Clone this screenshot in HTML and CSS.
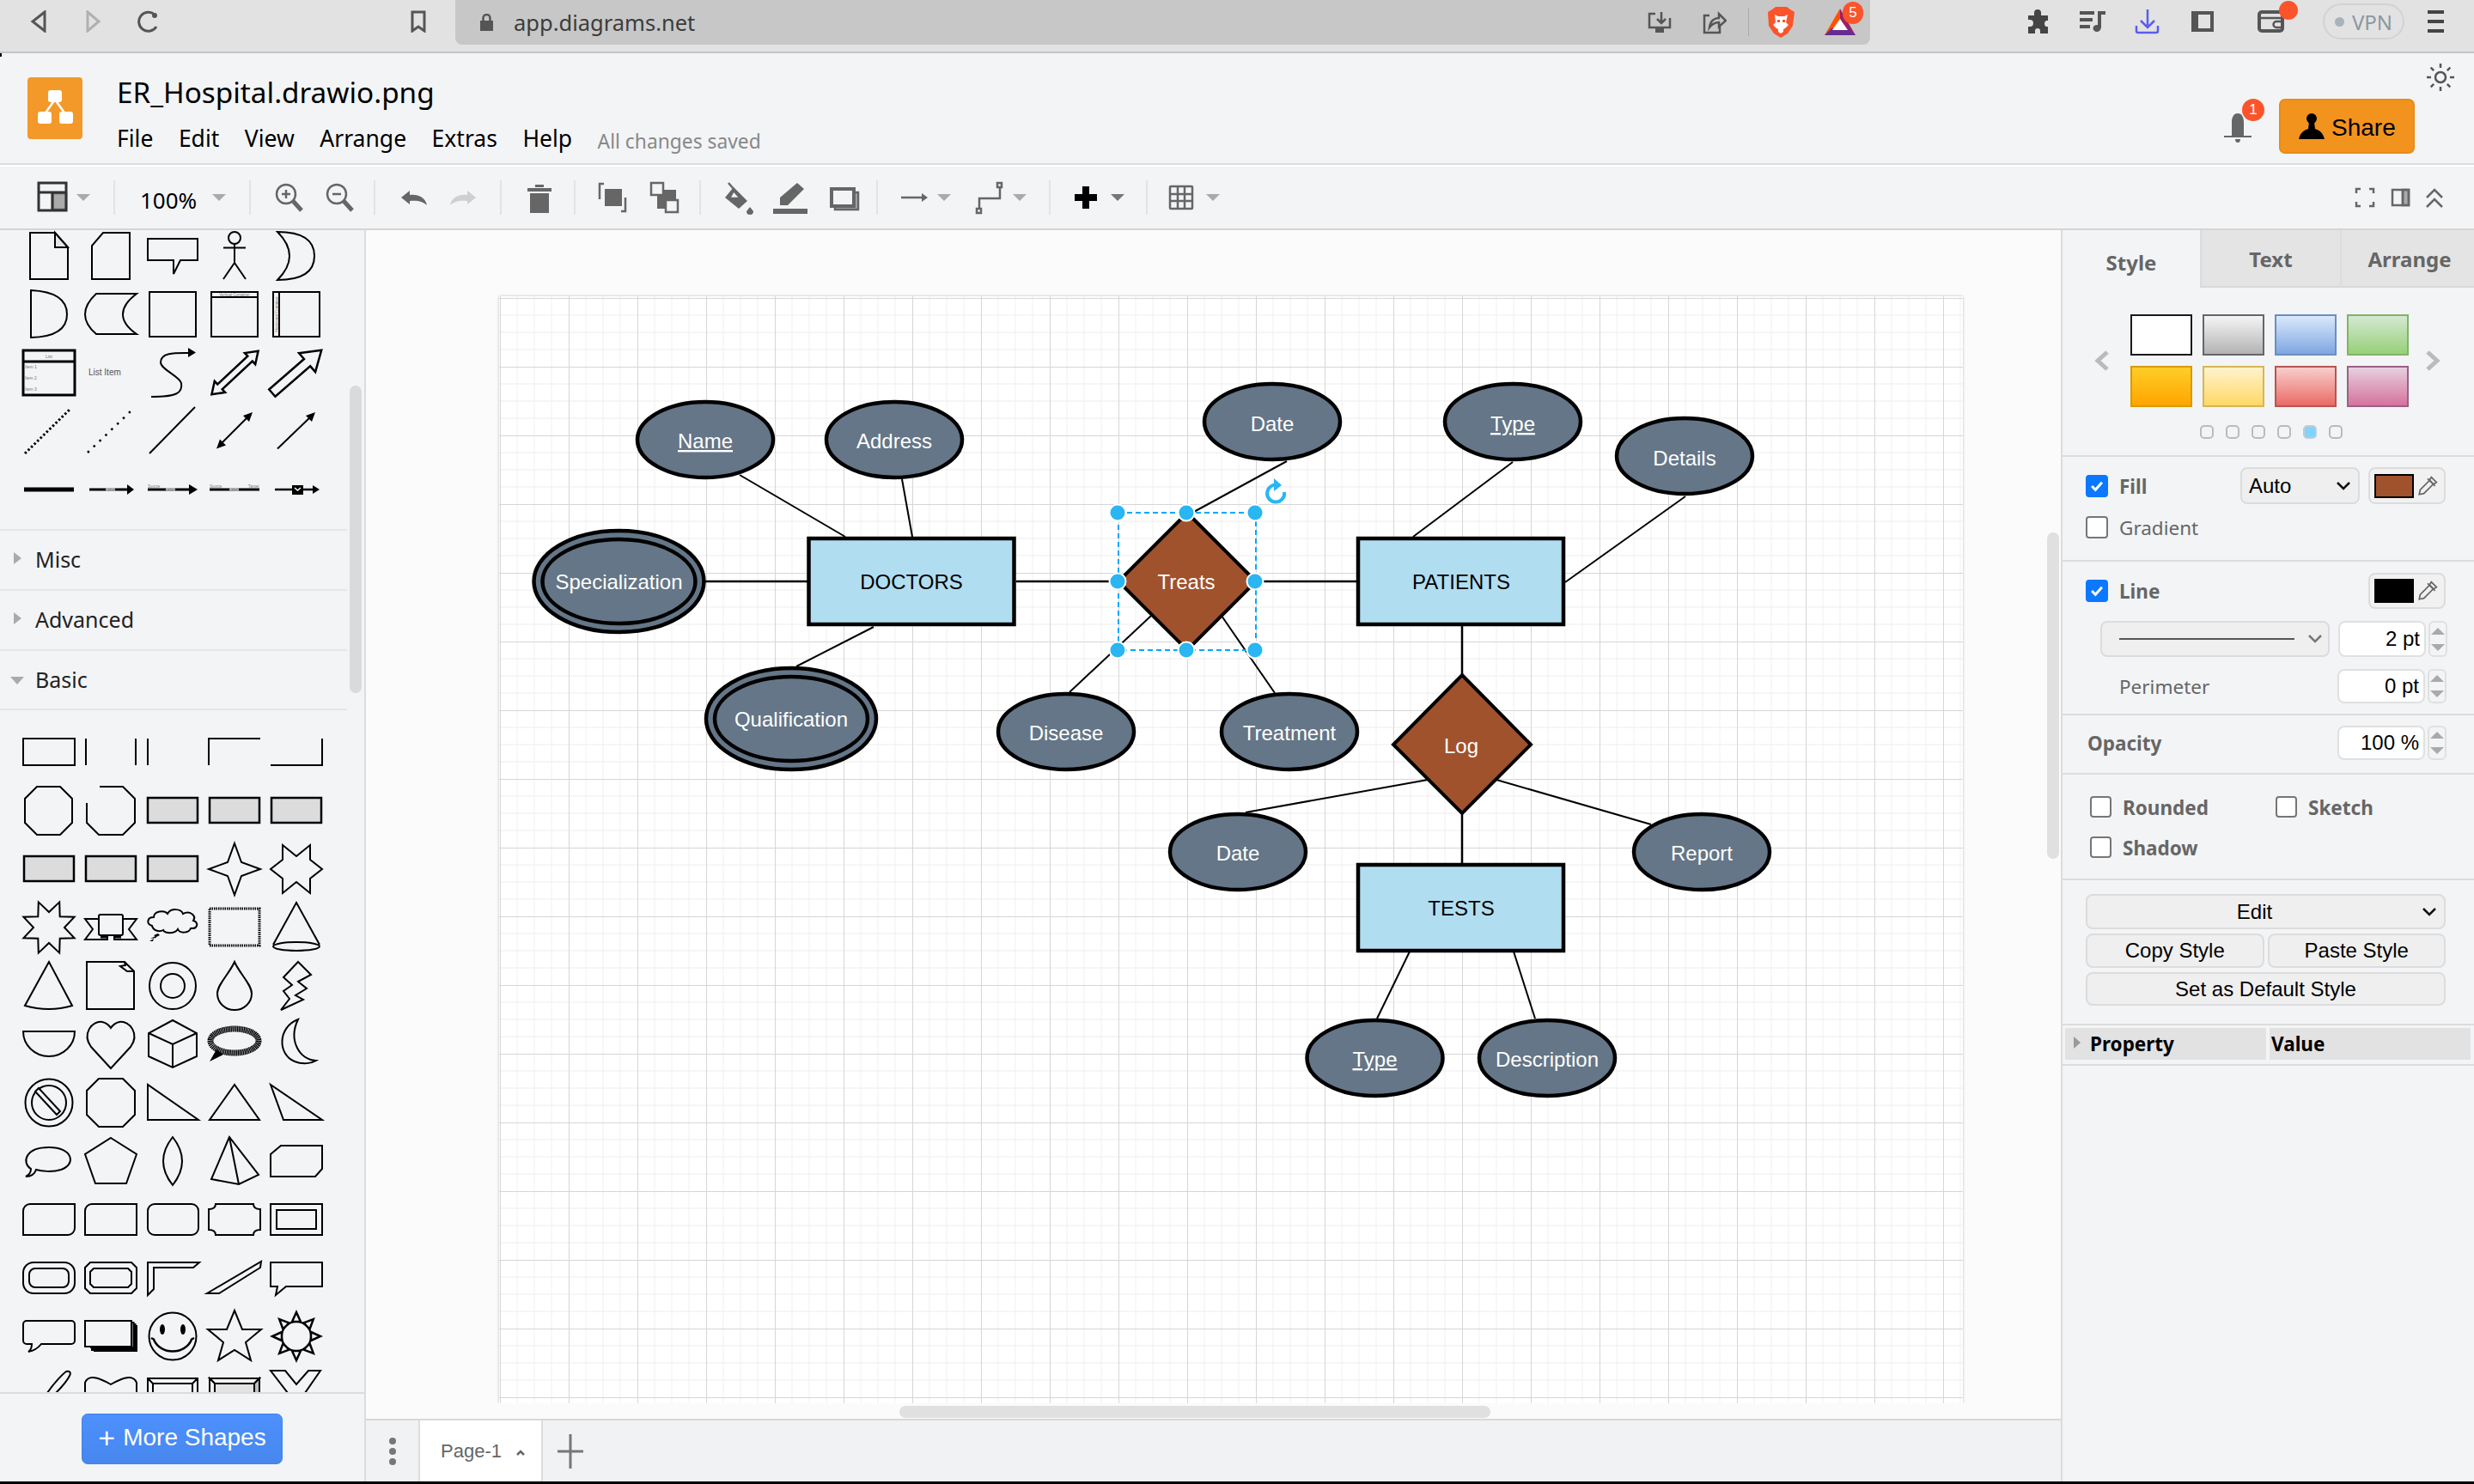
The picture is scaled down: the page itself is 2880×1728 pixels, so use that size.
FILE: index.html
```html
<!DOCTYPE html>
<html lang="en">
<head>
<meta charset="utf-8">
<title>ER_Hospital.drawio.png</title>
<link rel="stylesheet" href="styles.css">
</head>
<body>
<div class="app">

<div class="browser">
  <svg class="bi b-back" viewBox="0 0 20 26"><path d="M17 2 3 13l14 11z"/></svg>
  <svg class="bi b-forward" viewBox="0 0 18 26"><path d="M2 2 15 13 2 24z"/></svg>
  <svg class="bi b-reload" viewBox="0 0 26 26"><path d="M20 5A11 11 0 1 0 22 19"/><circle class="f" cx="20" cy="6" r="3"/></svg>
  <svg class="bi b-mark" viewBox="0 0 20 26"><path d="M3 2h14v22l-7-5-7 5z"/></svg>
  <div class="urlbar">
    <svg class="b-lock" viewBox="0 0 17 20"><path class="f" d="M1 8h15v12H1z"/><path class="lk" d="M4.5 9V5a4 4 0 0 1 8 0v4"/></svg>
    <span class="url">app.diagrams.net</span>
    <svg class="bi b-install" viewBox="0 0 28 26"><path d="M9 3H2v16h24V8"/><path d="M16 1v12M11 9l5 5 5-5"/><path class="f" d="M9 20h10v5H9z"/></svg>
    <svg class="bi b-share" viewBox="0 0 28 28"><path d="M8 6H2v20h18v-7"/><path d="M8 20c1-8 6-11 11-11V4l8 8-8 7v-5c-5 0-8 2-11 6z"/></svg>
    <span class="b-sep"></span>
    <svg class="b-brave" viewBox="0 0 31 36"><path fill="#fb542b" d="M5 3 9 0h13l4 3 5 3-2 16-6 9-8 5-8-5-6-9L0 6z"/><path fill="#fff" d="M8 9l4 2h7l4-2-2 9 3 3-4 4-2 1v3l-3 2-3-2v-3l-2-1-4-4 3-3z"/><path fill="#fb542b" d="M11 15h3v3h-3zM17 15h3v3h-3z"/></svg>
    <span class="bat">
      <svg class="b-bat" viewBox="0 0 36 32"><path fill="#ff5000" d="M18 0 0 31h8L18 12z"/><path fill="#9e1f63" d="M18 0l18 31h-8L18 12z"/><path fill="#662d91" d="M0 31l8-8h20l8 8z"/><path fill="#fff" d="M18 12l9 13H9z"/></svg>
      <span class="badge-5">5</span>
    </span>
  </div>
  <svg class="b-puzzle" viewBox="0 0 29 28"><path fill="#444" d="M10 4a4 4 0 0 1 8 0v3h8v6h-2a4 4 0 0 0 0 7h2v8h-9v-3a3 3 0 0 0-6 0v3H3v-8h2a4 4 0 0 0 0-8H3V7h7z"/></svg>
  <svg class="bi b-music" viewBox="0 0 32 26"><path d="M1 3h17M1 11h15M1 19h12M24 21V3h7"/><ellipse class="f" cx="21" cy="21" rx="4.5" ry="4"/></svg>
  <svg class="bi b-dl" viewBox="0 0 29 30"><path d="M15 1v21M7 14l8 8 8-8M2 20v6a2 2 0 0 0 2 2h21a2 2 0 0 0 2-2v-6"/></svg>
  <svg class="bi b-side" viewBox="0 0 26 24"><path class="thick" d="M2 2h22v20H2z"/><path class="f" d="M2 2h6v20H2z"/></svg>
  <span class="wallet">
    <svg class="bi b-wallet" viewBox="0 0 31 26"><path class="thick" d="M2 5a3 3 0 0 1 3-3h21a3 3 0 0 1 3 3v16a3 3 0 0 1-3 3H5a3 3 0 0 1-3-3z"/><path d="M2 9h27"/><path d="M29 13h-7a3 3 0 0 0 0 7h7"/></svg>
    <span class="wallet-dot"></span>
  </span>
  <span class="vpn"><i class="vpn-dot"></i>VPN</span>
  <span class="hamb"><i></i><i></i><i></i></span>
</div>

<header class="head">
  <svg class="logo" viewBox="0 0 64 72"><rect width="64" height="72" rx="4" fill="#f2992a"/><path d="M32 26 19 44M32 26 45 44" stroke="#fff" stroke-width="2.5"/><rect x="24" y="15" width="16" height="14" rx="3" fill="#fff"/><rect x="12" y="40" width="16" height="14" rx="3" fill="#fff"/><rect x="37" y="40" width="16" height="14" rx="3" fill="#fff"/></svg>
  <div class="titles">
    <div class="doc-title">ER_Hospital.drawio.png</div>
    <nav class="menu">
      <span>File</span><span>Edit</span><span>View</span><span>Arrange</span><span>Extras</span><span>Help</span>
      <em>All changes saved</em>
    </nav>
  </div>
  <div class="head-right">
    <svg class="gear" viewBox="0 0 34 34"><circle cx="17" cy="17" r="6"/><path d="M17 1v5M17 28v5M1 17h5M28 17h5M5.7 5.7l3.5 3.5M24.8 24.8l3.5 3.5M5.7 28.3l3.5-3.5M24.8 9.2l3.5-3.5"/></svg>
    <div class="actions">
      <span class="bell">
        <svg viewBox="0 0 32 34"><path fill="#666" d="M16 0c5 0 7 5 7 10v16h9v2H0v-2h9V10C9 5 11 0 16 0z"/><path fill="#666" d="M13 30h6a3 4 0 0 1-6 0z"/></svg>
        <span class="badge-1">1</span>
      </span>
      <button class="share">
        <svg viewBox="0 0 30 30"><circle cx="15" cy="6" r="6"/><path d="M12 10h6l1 8c5 2 9 4 11 12H0c2-8 6-10 11-12z"/></svg>
        <span>Share</span>
      </button>
    </div>
  </div>
</header>

<div class="toolbar">
  <svg class="ti t-layout" viewBox="0 0 40 40"><path fill="#aaa" d="M20 15h16v19H20z"/><path class="d" d="M4 3h32v32H4zM4 14h32M20 14v21"/></svg>
  <i class="caret c-first"></i>
  <span class="sep s-1"></span>
  <span class="zoomval">100%</span>
  <i class="caret c-zoom"></i>
  <span class="sep s-2"></span>
  <svg class="ti t-zi" viewBox="0 0 40 40"><circle cx="17" cy="16" r="11"/><path class="w" d="M25 24l10 11"/><path d="M12 16h10M17 11v10"/></svg>
  <svg class="ti t-zo" viewBox="0 0 40 40"><circle cx="17" cy="16" r="11"/><path class="w" d="M25 24l10 11"/><path d="M12 16h10"/></svg>
  <span class="sep s-3"></span>
  <svg class="ti t-undo" viewBox="0 0 40 40"><path class="solid" d="M6 20l10-8v5c10-1 18 3 20 12-5-5-12-6-20-5v4z"/></svg>
  <svg class="ti t-redo light" viewBox="0 0 40 40"><path class="solid" d="M34 20l-10-8v5C14 16 6 20 4 29c5-5 12-6 20-5v4z"/></svg>
  <span class="sep s-4"></span>
  <svg class="ti t-trash" viewBox="0 0 40 40"><path class="solid" d="M6 9h28v4H6zM15 5h10v3H15zM9 15h22v23H9z"/></svg>
  <span class="sep s-5"></span>
  <svg class="ti t-front" viewBox="0 0 40 40"><path class="solid" d="M11 10h20v20H11z"/><path d="M10 4H5v18M30 36h5V20"/></svg>
  <svg class="ti t-back" viewBox="0 0 40 40"><path class="solid" d="M12 11h22v22H12z"/><rect class="box" x="5" y="3" width="14" height="14"/><rect class="box" x="22" y="23" width="14" height="14"/></svg>
  <span class="sep s-6"></span>
  <svg class="ti t-fill" viewBox="0 0 40 40"><path class="solid" d="M14 8l16 16-10 9L4 20z"/><path class="solid" d="M33 31l4 5a4 4 0 0 1-8 0z"/><path class="wh" d="M14 12l8 9H9z"/><path d="M8 3l12 14"/></svg>
  <svg class="ti t-line" viewBox="0 0 40 40"><path class="solid" d="M28 3l8 7-19 19H8v-9zM0 33h40v6H0z"/></svg>
  <svg class="ti t-shadow" viewBox="0 0 40 40"><path fill="#aaa" d="M10 14h27v20H10z"/><path class="wh thick" d="M6 10h26v20H6z"/></svg>
  <span class="sep s-7"></span>
  <svg class="ti t-arrow" viewBox="0 0 40 40"><path d="M5 20h26"/><path class="solid" d="M29 15l7 5-7 5z"/></svg>
  <i class="caret c-arrow"></i>
  <svg class="ti t-way" viewBox="0 0 40 40"><path d="M8 33V21h24V8"/><rect class="box" x="29" y="3" width="5" height="5"/><rect class="box" x="5" y="33" width="5" height="5"/></svg>
  <i class="caret c-way"></i>
  <span class="sep s-8"></span>
  <svg class="ti t-plus" viewBox="0 0 40 40"><path class="plus" d="M20 7v26M7 20h26"/></svg>
  <i class="caret dark c-plus"></i>
  <span class="sep s-9"></span>
  <svg class="ti t-table" viewBox="0 0 40 40"><rect x="7" y="7" width="26" height="26" rx="1"/><path d="M16 7v26M24 7v26M7 16h26M7 24h26"/></svg>
  <i class="caret c-table"></i>
  <svg class="ti t-full" viewBox="0 0 40 40"><path d="M10 15v-5h5M25 10h5v5M30 25v5h-5M15 30h-5v-5"/></svg>
  <svg class="ti t-panel" viewBox="0 0 40 40"><path fill="#aaa" d="M23 11h7v18h-7z"/><path d="M11 11h19v18H11zM23 11v18"/></svg>
  <svg class="ti t-coll" viewBox="0 0 40 40"><path d="M11 20l9-9 9 9M11 31l9-9 9 9"/></svg>
</div>

<div class="main">
  <aside class="sidebar">
    <div class="palette-scroll">
      <div class="palette p-top">
        <svg class="sh" viewBox="0 0 72 68"><path d="M14 7h29l15 17v37H14z"/><path class="g1" d="M43 7v17h15z"/></svg>
        <svg class="sh" viewBox="0 0 72 68"><path d="M27 7h31v54H14V22z"/></svg>
        <svg class="sh" viewBox="0 0 72 68"><path d="M7 14h58v25H45l-8 16V39H7z"/></svg>
        <svg class="sh" viewBox="0 0 72 68"><circle cx="36" cy="13" r="7"/><path d="M23 24.500h26M36 20v22L23 61M36 42l13 19"/></svg>
        <svg class="sh" viewBox="0 0 72 68"><path d="M14 6q43 0 43 28T14 62q14-14 14-28T14 6z"/></svg>

        <svg class="sh" viewBox="0 0 72 68"><path d="M15 6q42 2 42 28T15 61z"/></svg>
        <svg class="sh" viewBox="0 0 72 68"><path d="M19 10h47Q50 22 50 34t16 23H19Q6 46 6 34t13-24z"/></svg>
        <svg class="sh" viewBox="0 0 72 68"><path d="M9 8h54v52H9z"/></svg>
        <svg class="sh" viewBox="0 0 72 68"><path d="M9 8h54v52H9zM9 14h54"/><text class="tiny" x="36" y="12.500" text-anchor="middle">Vertical Container</text></svg>
        <svg class="sh" viewBox="0 0 72 68"><path d="M9 8h54v52H9zM16 8v52"/><text class="tiny" transform="rotate(-90 13.500 34)" x="13.500" y="35.500" text-anchor="middle">Horizontal Container</text></svg>

        <svg class="sh" viewBox="0 0 72 68"><path class="t3" d="M6 8h60v52H6zM6 21h60"/><text class="tiny5" x="36" y="17" text-anchor="middle">List</text><text class="tiny5" x="8" y="29">Item 1</text><text class="tiny5" x="8" y="42">Item 2</text><text class="tiny5" x="8" y="55">Item 3</text></svg>
        <svg class="sh" viewBox="0 0 72 68"><text class="listitem" x="10" y="37">List Item</text></svg>
        <svg class="sh" viewBox="0 0 72 68"><path d="M11 62c29 0 37-4 35-16-2-8-24-16-24-24 0-12 18-11 33-11"/><path class="k" d="M54 5l9 5.500-9 5.500z"/></svg>
        <svg class="sh" viewBox="0 0 72 68"><path class="t25" transform="translate(36.500 34) rotate(-43)" d="M-37 0l13-9v5h48v-5l13 9-13 9v-5h-48v5z"/></svg>
        <svg class="sh" viewBox="0 0 72 68"><path class="t25" transform="translate(35 34) rotate(-41)" d="M-36-5.500h54v-9L40 0 18 14.500V5.500h-54z"/></svg>

        <svg class="sh" viewBox="0 0 72 68"><path class="dot1" d="M8 60 61 8"/></svg>
        <svg class="sh" viewBox="0 0 72 68"><path class="dot2" d="M9 59l50-48"/></svg>
        <svg class="sh" viewBox="0 0 72 68"><path d="M9 60 62 6"/></svg>
        <svg class="sh" viewBox="0 0 72 68"><path d="M19 50l34-34"/><path class="k" d="M15 54.500l4-11 7 7zM57 12l-4 11-7-7z"/></svg>
        <svg class="sh" viewBox="0 0 72 68"><path d="M14 54.500 54 16"/><path class="k" d="M58 12l-4 11-7-7z"/></svg>

        <svg class="sh" viewBox="0 0 72 68"><path class="t5" d="M7 34h58"/></svg>
        <svg class="sh" viewBox="0 0 72 68"><path class="t3" d="M11 34h46"/><path class="k" d="M55 28l8 6-8 6z"/><rect class="mask" x="30" y="32" width="11" height="4"/><text class="tiny" x="35.500" y="35.500" text-anchor="middle">Label</text></svg>
        <svg class="sh" viewBox="0 0 72 68"><path class="t3" d="M7 34h50"/><path class="k" d="M55 28l10 6-10 6z"/><rect class="mask" x="28" y="32" width="11" height="4"/><text class="tiny" x="33" y="35.500" text-anchor="middle">Label</text><text class="tiny" x="7" y="32">Source</text></svg>
        <svg class="sh" viewBox="0 0 72 68"><path class="t3" d="M7 34h58"/><rect class="mask" x="30" y="32" width="11" height="4"/><text class="tiny" x="35" y="35.500" text-anchor="middle">Label</text><text class="tiny" x="7" y="32">Source</text><text class="tiny" x="52" y="32">Target</text></svg>
        <svg class="sh" viewBox="0 0 72 68"><path class="t25" d="M11 34h46"/><path class="k" d="M55 29l8 5-8 5z"/><path class="k" d="M31 29h13v11H31z"/><path class="wline" d="M34 32l3.500 3 3.500-3"/></svg>
      </div>

      <div class="section">Misc</div>
      <div class="section">Advanced</div>
      <div class="section open">Basic</div>

      <div class="palette p-basic">
        <svg class="sh" viewBox="0 0 72 68"><path d="M6 18h60v31H6z"/></svg>
        <svg class="sh" viewBox="0 0 72 68"><path d="M7 18v31M65 18v31"/></svg>
        <svg class="sh" viewBox="0 0 72 68"><path d="M7 18v31"/></svg>
        <svg class="sh" viewBox="0 0 72 68"><path d="M6 49V18h60"/></svg>
        <svg class="sh" viewBox="0 0 72 68"><path d="M6 49h60V18"/></svg>

        <svg class="sh" viewBox="0 0 72 68"><path d="M22 6h27l14 14v28L49 62H22L8 48V20z"/></svg>
        <svg class="sh" viewBox="0 0 72 68"><path d="M23 6h27l14 14v28L50 62H22L8 48V25"/></svg>
        <svg class="sh" viewBox="0 0 72 68"><path class="gr" d="M7 19h58v29H7z"/></svg>
        <svg class="sh" viewBox="0 0 72 68"><path class="gr" d="M7 19h58v29H7z"/></svg>
        <svg class="sh" viewBox="0 0 72 68"><path class="gr" d="M7 19h58v29H7z"/></svg>

        <svg class="sh" viewBox="0 0 72 68"><path class="gr" d="M7 19h58v29H7z"/></svg>
        <svg class="sh" viewBox="0 0 72 68"><path class="gr" d="M7 19h58v29H7z"/></svg>
        <svg class="sh" viewBox="0 0 72 68"><path class="gr" d="M7 19h58v29H7z"/></svg>
        <svg class="sh" viewBox="0 0 72 68"><path d="M36 4l8 22 22 8-22 8-8 22-8-22-22-8 22-8z"/></svg>
        <svg class="sh" viewBox="0 0 72 68"><path d="M20 6l16 13L52 6v17l14 11-14 11v17L36 49 20 62V45L6 34l14-11z"/></svg>

        <svg class="sh" viewBox="0 0 72 68"><path d="M23.800 4.400 36 16l12.200-11.600 .5 16.900 16.900.5L54 34l11.600 12.200-16.900.5-.5 16.900L36 52 23.800 63.600l-.5-16.900-16.900-.5L18 34 6.400 21.800l16.900-.5z"/></svg>
        <svg class="sh" viewBox="0 0 72 68"><path d="M22 24H6l9 12-9 12h26v-5M50 24h16l-9 12 9 12H40v-5M32 43v5M40 43v5"/><rect x="22" y="19" width="28" height="24" rx="2"/><path class="t3" d="M24 45h8M40 45h8"/></svg>
        <svg class="sh" viewBox="0 0 72 68"><path d="M12 32C5 30 6 22 14 22c0-7 12-9 16-4 4-7 16-6 18 0 8-4 16 2 12 8 7 2 5 10-3 9-2 6-13 6-15 1-4 6-15 5-17 1-5 3-12 0-13-5z"/><path class="k" d="M9 50l5-3-1 3zM10 47l6-3 1 2zM14 43l5-2 2 2-4 2z"/></svg>
        <svg class="sh" viewBox="0 0 72 68"><path class="wavy" d="M7 12h58v43H7z"/></svg>
        <svg class="sh" viewBox="0 0 72 68"><path d="M9 54 36 5l27 49"/><ellipse cx="36" cy="56" rx="27" ry="5"/></svg>

        <svg class="sh" viewBox="0 0 72 68"><path d="M36 6 8 57q28 8 55 0z"/></svg>
        <svg class="sh" viewBox="0 0 72 68"><path d="M8 6h44l11 11v44H8z"/><path d="M52 6l1 4-6 1 8 6h8"/></svg>
        <svg class="sh" viewBox="0 0 72 68"><circle cx="36" cy="34" r="27"/><circle cx="36" cy="34" r="14"/></svg>
        <svg class="sh" viewBox="0 0 72 68"><path d="M36 6c-6 14-20 26-20 37a20 19 0 0 0 40 0c0-11-14-23-20-37z"/></svg>
        <svg class="sh" viewBox="0 0 72 68"><path d="M38 6l15 15-15 8 10 8-13 8 9 5-26 12 10-13-7-9 10-7-10-9z"/></svg>

        <svg class="sh" viewBox="0 0 72 68"><path d="M6 19h60a30 29 0 0 1-60 0z"/></svg>
        <svg class="sh" viewBox="0 0 72 68"><path d="M36 62 13 37C2 22 14 6 26 8c5 1 8 4 10 7 2-3 5-6 10-7 12-2 24 14 13 29z"/></svg>
        <svg class="sh" viewBox="0 0 72 68"><path d="M36 6l28 15v27L36 61 8 48V21zM8 21l28 13 28-13M36 34v27"/></svg>
        <svg class="sh" viewBox="0 0 72 68"><path class="k" d="M15 40 7 54l16-8z"/><ellipse class="spiky" cx="36" cy="30" rx="28" ry="14"/><ellipse class="wh2" cx="36" cy="30" rx="23" ry="10"/></svg>
        <svg class="sh" viewBox="0 0 72 68"><path d="M38 5C14 14 14 46 34 54c10 4 20 2 25-1C40 52 26 30 38 5z"/></svg>

        <svg class="sh" viewBox="0 0 72 68"><circle cx="36" cy="34" r="27.500"/><circle cx="36" cy="34" r="20"/><path class="wfill" d="M24 17 49 44 45 48 20 21z"/></svg>
        <svg class="sh" viewBox="0 0 72 68"><path d="M22 6h28l14 14v28L50 62H22L8 48V20z"/></svg>
        <svg class="sh" viewBox="0 0 72 68"><path d="M7 13v41h59z"/></svg>
        <svg class="sh" viewBox="0 0 72 68"><path d="M36 13 7 54h58z"/></svg>
        <svg class="sh" viewBox="0 0 72 68"><path d="M6 13l15 41h45z"/></svg>

        <svg class="sh" viewBox="0 0 72 68"><path d="M15 43C4 36 8 18 36 18c28 0 32 20 14 26-10 3-22 2-29 0-2 6-6 8-12 8 4-2 6-5 6-9z"/></svg>
        <svg class="sh" viewBox="0 0 72 68"><path d="M36 7l30 19-12 34H18L6 26z"/></svg>
        <svg class="sh" viewBox="0 0 72 68"><path d="M36 6q22 28 0 56-22-28 0-56z"/></svg>
        <svg class="sh" viewBox="0 0 72 68"><path d="M30 6 9 55l32 6 23-11zM30 6l11 55"/></svg>
        <svg class="sh" viewBox="0 0 72 68"><path d="M18 16h48v27l-8 9H6V26z"/></svg>

        <svg class="sh" viewBox="0 0 72 68"><path d="M14 16h52v28a8 8 0 0 1-8 8H6V24a8 8 0 0 1 8-8z"/></svg>
        <svg class="sh" viewBox="0 0 72 68"><path d="M14 16h52v36H6V24a8 8 0 0 1 8-8z"/></svg>
        <svg class="sh" viewBox="0 0 72 68"><rect x="7" y="16" width="59" height="36" rx="8"/></svg>
        <svg class="sh" viewBox="0 0 72 68"><path d="M14 16h44q0 6 8 6v24q-8 0-8 6H14q0-6-8-6V22q8 0 8-6z"/></svg>
        <svg class="sh" viewBox="0 0 72 68"><path d="M6 16h60v36H6zM13 23h46v22H13z"/></svg>

        <svg class="sh" viewBox="0 0 72 68"><rect x="6" y="16" width="60" height="36" rx="12"/><rect x="13" y="23" width="46" height="22" rx="7"/></svg>
        <svg class="sh" viewBox="0 0 72 68"><path d="M12 16h48l6 6v24l-6 6H12l-6-6V22zM16 23h40l4 4v14l-4 4H16l-4-4V27z"/></svg>
        <svg class="sh" viewBox="0 0 72 68"><path d="M7 16h60l-7 6H14v25l-7 7z"/></svg>
        <svg class="sh" viewBox="0 0 72 68"><path d="M4 52 67 15l-1 7-48 30z"/></svg>
        <svg class="sh" viewBox="0 0 72 68"><path d="M6 16h60v28H24l-12 10 2-10H6z"/></svg>

        <svg class="sh" viewBox="0 0 72 68"><path d="M10 16h52a4 4 0 0 1 4 4v19a4 4 0 0 1-4 4H27c-4 5-9 8-15 9 3-2 4-5 4-9h-6a4 4 0 0 1-4-4V20a4 4 0 0 1 4-4z"/></svg>
        <svg class="sh" viewBox="0 0 72 68"><path d="M60 18h2.500v29H12M62.500 20h2v29H14M64.500 22H66v29H16" /><path class="k" d="M13 46h50v5H13z"/><path class="wh3" d="M6 16h54v30H6z"/></svg>
        <svg class="sh" viewBox="0 0 72 68"><circle cx="36" cy="34" r="27.500"/><ellipse class="k" cx="24" cy="26" rx="3" ry="6"/><ellipse class="k" cx="48" cy="26" rx="3" ry="6"/><path class="t25" d="M14 38c8 18 36 18 44 0M11 36l4 2M61 36l-4 2"/></svg>
        <svg class="sh" viewBox="0 0 72 68"><path d="M36 4l9 22h22L49 41l6 21-19-12-19 12 6-21L5 26h22z"/></svg>
        <svg class="sh" viewBox="0 0 72 68"><circle cx="36" cy="34" r="17"/><g><path id="ray" class="kr" d="M31 17l5-11 5 11z"/><use href="#ray" transform="rotate(45 36 34)"/><use href="#ray" transform="rotate(90 36 34)"/><use href="#ray" transform="rotate(135 36 34)"/><use href="#ray" transform="rotate(180 36 34)"/><use href="#ray" transform="rotate(225 36 34)"/><use href="#ray" transform="rotate(270 36 34)"/><use href="#ray" transform="rotate(315 36 34)"/></g></svg>

        <svg class="sh" viewBox="0 0 72 68"><path d="M34 32c8-12 18-22 22-25 4-1 6 1 4 5-4 8-10 14-16 20"/></svg>
        <svg class="sh" viewBox="0 0 72 68"><path d="M6 34V20c4-10 16-6 30 2 14-8 26-12 30-2v14"/></svg>
        <svg class="sh" viewBox="0 0 72 68"><path d="M7 15h58v30H7zM13 21h46v20H13zM7 15l6 6M65 15l-6 6"/></svg>
        <svg class="sh bev" viewBox="0 0 72 68"><path fill="#f2f1f0" d="M7 15h58l-6 6H13z"/><path fill="#f2f1f0" d="M7 15l6 6v20H7z"/><path fill="#e3e3e3" d="M13 21h46v20H13z"/><path fill="#c0c0c0" d="M65 15v26h-6V21z"/></svg>
        <svg class="sh" viewBox="0 0 72 68"><path d="M6 6h17l13 16L50 6h14L46 32H26z"/></svg>
      </div>
    </div>
    <div class="more-wrap"><button class="more"><b>+</b> <span>More Shapes</span></button></div>
    <span class="side-thumb"></span>
  </aside>

  <div class="center">
    <div class="canvas">
      <div class="page">
        <svg class="diagram" viewBox="581 345 1704 1289">
          <defs>
            <pattern id="grid" patternUnits="userSpaceOnUse" x="582" y="347" width="80" height="80">
              <path class="gmin-h" d="M0 20h80M0 40h80M0 60h80"/>
              <path class="gmin-v" d="M20 0v80M40 0v80M60 0v80"/>
              <path class="gmaj-h" d="M0 .5h80"/>
              <path class="gmaj-v" d="M.5 0v80"/>
            </pattern>
          </defs>
          <rect x="581" y="345" width="1704" height="1289" fill="url(#grid)"/>

          <g class="links">
            <path d="M861 553 984 625"/>
            <path d="M1050 558 1062 625"/>
            <path class="thick2" d="M821 677H940"/>
            <path d="M1017 730 927 776"/>
            <path class="thick2" d="M1183 677H1302M1462 677H1580"/>
            <path d="M1498 537 1388 597"/>
            <path d="M1245 806 1340 717"/>
            <path d="M1484 807 1422 717"/>
            <path d="M1761 538 1645 625"/>
            <path d="M1962 578 1822 678"/>
            <path class="thick2" d="M1702 729V786M1702 947V1005"/>
            <path d="M1662 908 1450 946"/>
            <path d="M1742 908 1922 960"/>
            <path d="M1641 1108 1603 1186"/>
            <path d="M1762 1108 1787 1186"/>
          </g>

          <g class="attr">
            <ellipse cx="821" cy="512" rx="79" ry="44"/>
            <ellipse cx="1041" cy="512" rx="79" ry="44"/>
            <ellipse cx="720.500" cy="677" rx="99" ry="59"/>
            <ellipse class="in" cx="720.500" cy="677" rx="89" ry="49"/>
            <ellipse cx="921" cy="837" rx="99" ry="59"/>
            <ellipse class="in" cx="921" cy="837" rx="89" ry="49"/>
            <ellipse cx="1481" cy="491" rx="79" ry="44"/>
            <ellipse cx="1761" cy="491" rx="79" ry="44"/>
            <ellipse cx="1961" cy="531" rx="79" ry="44"/>
            <ellipse cx="1241" cy="852" rx="79" ry="44"/>
            <ellipse cx="1501" cy="852" rx="79" ry="44"/>
            <ellipse cx="1441" cy="992" rx="79" ry="44"/>
            <ellipse cx="1981" cy="992" rx="79" ry="44"/>
            <ellipse cx="1600.500" cy="1232" rx="79" ry="44"/>
            <ellipse cx="1801" cy="1232" rx="79" ry="44"/>
          </g>

          <g class="ent">
            <rect x="941.500" y="627" width="239" height="100"/>
            <rect x="1581" y="627" width="239" height="100"/>
            <rect x="1581" y="1007" width="239" height="100"/>
          </g>
          <g class="rel">
            <path d="M1382 597 1462 677 1382 757 1302 677z"/>
            <path d="M1702 786 1782 867 1702 947 1622 867z"/>
          </g>

          <g class="lbl w">
            <text x="821" y="522" class="u">Name</text>
            <text x="1041" y="522">Address</text>
            <text x="720.500" y="686">Specialization</text>
            <text x="921" y="846">Qualification</text>
            <text x="1481" y="502">Date</text>
            <text x="1761" y="502" class="u">Type</text>
            <text x="1961" y="542">Details</text>
            <text x="1241" y="862">Disease</text>
            <text x="1501" y="862">Treatment</text>
            <text x="1441" y="1002">Date</text>
            <text x="1981" y="1002">Report</text>
            <text x="1600.500" y="1242" class="u">Type</text>
            <text x="1801" y="1242">Description</text>
            <text x="1381" y="686">Treats</text>
            <text x="1701" y="877">Log</text>
          </g>
          <g class="lbl">
            <text x="1061" y="686">DOCTORS</text>
            <text x="1701" y="686">PATIENTS</text>
            <text x="1701" y="1066">TESTS</text>
          </g>

          <rect class="sel" x="1302" y="597" width="160" height="160"/>
          <g class="handles">
            <circle cx="1301" cy="597" r="9.500"/><circle cx="1381" cy="597" r="9.500"/><circle cx="1461" cy="597" r="9.500"/>
            <circle cx="1301" cy="677" r="9.500"/><circle cx="1461" cy="677" r="9.500"/>
            <circle cx="1301" cy="757" r="9.500"/><circle cx="1381" cy="757" r="9.500"/><circle cx="1461" cy="757" r="9.500"/>
          </g>
          <g class="rotate">
            <path d="M1488 565a10 10 0 1 0 7 8" />
            <path class="rh" d="M1483 557l9 8-9 7z"/>
          </g>
        </svg>
      </div>
      <span class="h-thumb"></span>
      <span class="v-thumb"></span>
    </div>
    <div class="tabs">
      <span class="dots"><i></i><i></i><i></i></span>
      <div class="page-tab">Page-1 <svg viewBox="0 0 12 10"><path d="M2 7l4-4 4 4"/></svg></div>
      <svg class="add" viewBox="0 0 30 40"><path d="M15 0v40M0 20h30"/></svg>
    </div>
  </div>

  <aside class="panel">
    <div class="ptabs">
      <div class="ptab active">Style</div>
      <div class="ptab mid">Text</div>
      <div class="ptab last">Arrange</div>
    </div>
    <div class="sec styles">
      <div class="style-row">
        <svg class="chev" viewBox="0 0 18 26"><path d="M15 3 4 13l11 10"/></svg>
        <div class="swatches">
          <span class="sw s0"></span><span class="sw s1"></span><span class="sw s2"></span><span class="sw s3"></span>
          <span class="sw s4"></span><span class="sw s5"></span><span class="sw s6"></span><span class="sw s7"></span>
        </div>
        <svg class="chev" viewBox="0 0 18 26"><path d="M3 3l11 10L3 23"/></svg>
      </div>
      <div class="pager"><i></i><i></i><i></i><i></i><i class="on"></i><i></i></div>
    </div>

    <div class="sec fillsec">
      <div class="row">
        <span class="cb on"><svg viewBox="0 0 26 26"><path d="M6 13l5 5 9-10"/></svg></span>
        <span class="lab b">Fill</span>
        <span class="sel-box auto">Auto<svg class="chv" viewBox="0 0 18 12"><path d="M2 2l7 7 7-7"/></svg></span>
        <span class="colorbtn"><i class="cswatch brown"></i><svg class="pip" viewBox="0 0 24 24"><path d="M3 21l1-5L14 6l4 4L8 20zM12 4l8 8M16 2.500l5.500 5.500-3 2-4.500-4.500z"/></svg></span>
      </div>
      <div class="row r2">
        <span class="cb"></span>
        <span class="lab">Gradient</span>
      </div>
    </div>

    <div class="sec linesec">
      <div class="row r42">
        <span class="cb on"><svg viewBox="0 0 26 26"><path d="M6 13l5 5 9-10"/></svg></span>
        <span class="lab b">Line</span>
        <span class="colorbtn push"><i class="cswatch black"></i><svg class="pip" viewBox="0 0 24 24"><path d="M3 21l1-5L14 6l4 4L8 20zM12 4l8 8M16 2.500l5.500 5.500-3 2-4.500-4.500z"/></svg></span>
      </div>
      <div class="row r42 mt14">
        <span class="sel-box linesel"><i class="ln"></i><svg class="chv gr" viewBox="0 0 18 12"><path d="M2 2l7 7 7-7"/></svg></span>
        <span class="num h42">2 pt</span>
        <span class="spin h42"><i class="up"></i><i class="dn"></i></span>
      </div>
      <div class="row r40 mt14">
        <span class="lab perim">Perimeter</span>
        <span class="num push">0 pt</span>
        <span class="spin"><i class="up"></i><i class="dn"></i></span>
      </div>
    </div>

    <div class="sec opsec">
      <div class="row r40">
        <span class="lab b opl">Opacity</span>
        <span class="num push">100 %</span>
        <span class="spin"><i class="up"></i><i class="dn"></i></span>
      </div>
    </div>

    <div class="sec chks">
      <div class="chk-row">
        <span class="chk c-a"><span class="cb"></span><span class="lab b">Rounded</span></span>
        <span class="chk"><span class="cb"></span><span class="lab b">Sketch</span></span>
      </div>
      <div class="chk-row second">
        <span class="chk c-a"><span class="cb"></span><span class="lab b">Shadow</span></span>
      </div>
    </div>

    <div class="sec btns">
      <div class="btn edit">Edit<svg class="chv" viewBox="0 0 18 12"><path d="M2 2l7 7 7-7"/></svg></div>
      <div class="btn-row"><div class="btn">Copy Style</div><div class="btn">Paste Style</div></div>
      <div class="btn dflt">Set as Default Style</div>
    </div>

    <div class="sec tbl">
      <div class="th th1"><i class="tri"></i>Property</div>
      <div class="th">Value</div>
    </div>
  </aside>
</div>
</div>
</body>
</html>
```

FILE: styles.css
```css
* { box-sizing: border-box; }
html, body { margin: 0; padding: 0; height: 100%; }
body { font-family: "Noto Sans", "Liberation Sans", sans-serif; overflow: hidden; background: #f3f4f6; color: #000; }
.app { width: 2880px; height: 1728px; display: flex; flex-direction: column; border-bottom: 3px solid #000; }
i { font-style: normal; display: block; }

/* browser chrome */
.browser { height: 62px; flex: none; display: flex; align-items: center; padding-bottom: 10px; background: #e2e2e2; border-bottom: 2px solid #c4c4c4; }
.browser > * { flex: none; }
.bi { fill: none; stroke: #555; stroke-width: 2.5; }
.bi .f, .b-lock .f { fill: #555; stroke: none; }
.bi .thick { stroke-width: 4; }
.b-back { width: 20px; height: 26px; margin-left: 35px; stroke-width: 3; }
.b-forward { width: 18px; height: 26px; margin-left: 45px; stroke: #b0b0b0; stroke-width: 3; }
.b-reload { width: 26px; height: 26px; margin-left: 42px; stroke-width: 3; }
.b-mark { width: 20px; height: 26px; margin-left: 291px; stroke-width: 3; }
.urlbar { width: 1647px; height: 52px; margin-left: 33px; align-self: flex-start; background: #c7c7c7; border-radius: 0 0 8px 8px; display: flex; align-items: center; }
.b-lock { width: 17px; height: 20px; margin-left: 28px; }
.lk { fill: none; stroke: #555; stroke-width: 2.5; }
.url { margin-left: 23px; font-size: 25.500px; color: #3c3c3c; font-family: "Noto Sans", sans-serif; }
.b-install { width: 28px; height: 26px; margin-left: auto; }
.b-share { width: 28px; height: 28px; margin-left: 36px; }
.b-sep { width: 1px; height: 32px; margin-left: 25px; background: #aaa; }
.b-brave { width: 31px; height: 36px; margin-left: 22px; }
.bat { position: relative; width: 36px; height: 32px; margin-left: 35px; margin-right: 17px; }
.b-bat { width: 36px; height: 32px; display: block; }
.badge-5 { position: absolute; left: 21px; top: -8px; width: 24px; height: 26px; border-radius: 12px; background: #fb542b; color: #fff; font: 17px/26px "Liberation Sans", sans-serif; text-align: center; }
.b-puzzle { width: 29px; height: 28px; margin-left: 181px; }
.b-music { width: 32px; height: 26px; margin-left: 33px; stroke-width: 4; }
.b-dl { width: 29px; height: 30px; margin-left: 33px; stroke: #5c5cf0; }
.b-side { width: 26px; height: 24px; margin-left: 37px; }
.wallet { position: relative; width: 31px; height: 26px; margin-left: 51px; }
.b-wallet { width: 31px; height: 26px; display: block; }
.wallet-dot { position: absolute; left: 25px; top: -11px; width: 22px; height: 22px; border-radius: 50%; background: #fb542b; }
.vpn { width: 95px; height: 42px; margin-left: 45px; border: 2px solid #cfd3d6; border-radius: 21px; display: flex; align-items: center; justify-content: center; gap: 9px; color: #8a98a3; font: 24px "Noto Sans", sans-serif; }
.vpn-dot { width: 11px; height: 11px; border-radius: 50%; background: #a8b2ba; }
.hamb { margin-left: 27px; width: 19px; height: 26px; display: flex; flex-direction: column; justify-content: space-between; }
.hamb i { height: 4px; background: #444; }

/* app header */
.head { position: relative; height: 130px; flex: none; display: flex; background: #f3f4f6; border-bottom: 2px solid #dcdcdc; }
.head::before { content: ""; position: absolute; left: 0; top: 0; width: 2px; height: 4px; background: #000; }
.logo { width: 64px; height: 72px; margin: 28px 0 0 32px; flex: none; }
.titles { margin-left: 40px; padding-top: 22px; }
.doc-title { font-size: 33.300px; line-height: 46px; color: #000; }
.menu { display: flex; align-items: baseline; margin-top: 14px; font-size: 26.500px; line-height: 34px; }
.menu span { margin-right: 29.500px; }
.menu em { font-style: normal; font-size: 22.800px; color: #888; margin-left: 0; position: relative; top: 2px; }
.head-right { margin-left: auto; display: flex; flex-direction: column; align-items: flex-end; padding: 11px 22px 0 0; }
.gear { width: 34px; height: 34px; fill: none; stroke: #555; stroke-width: 2.5; }
.actions { display: flex; align-items: flex-start; margin: 8px 47px 0 0; }
.bell { position: relative; width: 32px; height: 34px; margin-top: 17px; margin-right: 32px; }
.bell svg { width: 32px; height: 34px; display: block; }
.badge-1 { position: absolute; left: 21px; top: -17px; width: 26px; height: 26px; border-radius: 50%; background: #fb542b; color: #fff; font: 17px/26px "Liberation Sans", sans-serif; text-align: center; }
.share { width: 158px; height: 64px; display: flex; align-items: center; padding: 0 0 0 21px; gap: 8px; background: #f2931e; border: 2px solid #e98c15; border-radius: 7px; font: 28px "Liberation Sans", sans-serif; color: #000; }
.share svg { width: 30px; height: 30px; }
.share span { position: relative; top: 2px; }

/* toolbar */
.toolbar { height: 76px; flex: none; display: flex; align-items: center; background: #f3f4f6; border-top: 2px solid #fff; border-bottom: 2px solid #d4d4d4; }
.toolbar > * { flex: none; }
.ti { width: 40px; height: 40px; fill: none; stroke: #666; stroke-width: 2.5; }
.ti .solid { fill: #666; stroke: none; }
.ti .w { stroke-width: 5; }
.ti .d { stroke: #333; stroke-width: 3; }
.ti .wh { fill: #f3f4f6; }
.ti .box { fill: #f3f4f6; }
.ti .thick { stroke-width: 4; }
.ti .plus { stroke: #000; stroke-width: 8; }
.ti.light { stroke: #ccc; }
.ti.light .solid { fill: #cfcfcf; }
.caret { width: 0; height: 0; border-left: 8px solid transparent; border-right: 8px solid transparent; border-top: 8px solid #aaa; }
.caret.dark { border-top-color: #777; }
.sep { width: 2px; height: 40px; background: #e2e3e5; }
.zoomval { width: 67px; font-size: 26px; margin-left: 29px; margin-top: 5px; color: #000; }
.t-layout { margin-left: 41px; }
.c-first { margin-left: 8px; }
.s-1 { margin-left: 27px; }
.c-zoom { margin-left: 17px; }
.s-2 { margin-left: 27px; }
.t-zi { margin-left: 24px; }
.t-zo { margin-left: 19px; }
.s-3 { margin-left: 20px; }
.t-undo { margin-left: 24px; }
.t-redo { margin-left: 19px; }
.s-4 { margin-left: 22px; }
.t-trash { margin-left: 24px; }
.s-5 { margin-left: 20px; }
.t-front { margin-left: 23px; }
.t-back { margin-left: 20px; }
.s-6 { margin-left: 21px; }
.t-fill { margin-left: 24px; }
.t-line { margin-left: 20px; }
.t-shadow { margin-left: 22px; }
.s-7 { margin-left: 18px; }
.t-arrow { margin-left: 22px; }
.c-arrow { margin-left: 7px; }
.t-way { margin-left: 25px; }
.c-way { margin-left: 7px; }
.s-8 { margin-left: 26px; }
.t-plus { margin-left: 21px; }
.c-plus { margin-left: 9px; }
.s-9 { margin-left: 25px; }
.t-table { margin-left: 19px; }
.c-table { margin-left: 9px; }
.t-full { margin-left: auto; }
.t-panel { margin-left: 1px; }
.t-coll { margin-left: 0; margin-right: 26px; }

/* main area */
.main { flex: 1; min-height: 0; display: flex; }
.sidebar { position: relative; width: 426px; flex: none; display: flex; flex-direction: column; background: #f3f4f6; border-right: 2px solid #dcdcdc; }
.palette-scroll { flex: 1; min-height: 0; overflow: hidden; }
.palette { width: 404px; display: grid; grid-template-columns: repeat(5, 72px); grid-auto-rows: 68px; padding-left: 21px; }
.p-top { margin-top: -4px; padding-bottom: 12px; box-sizing: content-box; width: 383px; }
.p-basic { padding-top: 15px; box-sizing: content-box; width: 383px; }
.section { width: 404px; height: 70px; border-top: 2px solid #e5e6e8; font-size: 25px; line-height: 66px; padding-left: 41px; position: relative; color: #222; }
.section.open { height: 71px; border-bottom: 2px solid #e5e6e8; }
.section::before { content: ""; position: absolute; left: 16px; top: 25px; border-left: 9px solid #aaa; border-top: 7px solid transparent; border-bottom: 7px solid transparent; }
.section.open::before { left: 12px; top: 30px; border-top: 9px solid #aaa; border-left: 8px solid transparent; border-right: 8px solid transparent; border-bottom: 0; }
.sh { width: 72px; height: 68px; display: block; fill: none; stroke: #000; stroke-width: 2; }
.sh .g1 { fill: #e6e6e6; }
.sh .gr { fill: #dcdcdc; stroke-width: 2.5; }
.sh .t3 { stroke-width: 3; }
.sh .t25 { stroke-width: 2.5; }
.sh .t5 { stroke-width: 5; }
.sh .k { fill: #000; stroke: none; }
.sh .kr { fill: #f3f4f6; stroke: #000; stroke-width: 2.5; }
.sh .mask { fill: #b8b8b8; stroke: none; }
.sh .dot1 { stroke-width: 3; stroke-dasharray: 2.500 2.500; }
.sh .dot2 { stroke-width: 2.500; stroke-dasharray: 2.500 7; }
.sh .wavy { stroke-width: 3; stroke-dasharray: 1.500 1; }
.sh .spiky { stroke: #000; stroke-width: 7; stroke-dasharray: 1.400 .5; }
.sh .wh2 { fill: #f3f4f6; stroke: none; }
.sh .wh3 { fill: #f3f4f6; }
.sh .wline { stroke: #fff; stroke-width: 1.500; }
.sh .wfill { fill: #f3f4f6; }
.sh text { stroke: none; fill: #777; font-family: "Liberation Sans", sans-serif; }
.sh .tiny { font-size: 4.500px; }
.sh .tiny5 { font-size: 5px; }
.sh .listitem { font-size: 10px; fill: #555; }
.more-wrap { height: 104px; flex: none; border-top: 2px solid #dcdcdc; padding: 23px 0 0 95px; }
.more { width: 234px; height: 59px; display: flex; align-items: center; justify-content: center; gap: 9px; background: linear-gradient(#4d90fe, #4787ed); border: 1px solid #3f83ee; border-radius: 7px; color: #fff; font: 28px "Liberation Sans", sans-serif; padding: 0 0 3px; }
.more b { font-weight: 400; font-size: 34px; line-height: 1; }
.side-thumb { position: absolute; left: 407px; top: 181px; width: 14px; height: 358px; border-radius: 7px; background: #d9dadc; }

/* canvas */
.center { flex: 1; min-width: 0; display: flex; flex-direction: column; }
.canvas { position: relative; flex: 1; min-height: 0; overflow: hidden; background: #fbfbfb; padding: 77px 0 0 155px; }
.page { width: 1704px; height: 1289px; background: #fff; box-shadow: 0 0 3px #bdbdbd; clip-path: inset(-4px -4px 0 -4px); }
.diagram { width: 1704px; height: 1289px; display: block; }
.gmin-h { stroke: #f6f6f6; stroke-width: 2; fill: none; }
.gmin-v { stroke: #f1f1f1; stroke-width: 1; fill: none; }
.gmaj-h { stroke: #d6d6d6; stroke-width: 1; fill: none; }
.gmaj-v { stroke: #d6d6d6; stroke-width: 1; fill: none; }
.links path { stroke: #000; stroke-width: 2; fill: none; }
.links .thick2 { stroke-width: 2.5; }
.attr ellipse { fill: #647687; stroke: #000; stroke-width: 4.500; }
.ent rect { fill: #b1ddf0; stroke: #000; stroke-width: 4.500; }
.rel path { fill: #a0522d; stroke: #000; stroke-width: 4; }
.lbl text { font-family: "Liberation Sans", sans-serif; font-size: 24px; text-anchor: middle; fill: #000; }
.lbl.w text { fill: #fff; }
.lbl .u { text-decoration: underline; }
.sel { fill: none; stroke: #00a8ff; stroke-width: 2; stroke-dasharray: 6 4; }
.handles circle { fill: #29b6f2; stroke: #fff; stroke-width: 2; }
.rotate path { fill: none; stroke: #29b6f2; stroke-width: 4; }
.rotate .rh { fill: #29b6f2; stroke: none; }
.h-thumb { position: absolute; left: 621px; top: 1369px; width: 688px; height: 14px; border-radius: 7px; background: #e0e0e0; }
.v-thumb { position: absolute; right: 2px; top: 352px; width: 14px; height: 380px; border-radius: 7px; background: #e0e0e0; }
.tabs { height: 73px; flex: none; display: flex; background: #f1f2f4; border-top: 2px solid #d8d8d8; }
.dots { width: 61px; flex: none; display: flex; flex-direction: column; align-items: center; justify-content: center; gap: 4px; }
.dots i { width: 8px; height: 8px; border-radius: 50%; background: #777; }
.page-tab { width: 145px; flex: none; background: #fff; border-left: 2px solid #ddd; border-right: 2px solid #ddd; padding-left: 24px; font: 22px/72px "Liberation Sans", sans-serif; color: #666; }
.page-tab svg { width: 12px; height: 10px; margin-left: 10px; fill: none; stroke: #666; stroke-width: 2.500; }
.add { width: 30px; height: 40px; margin: 16px 0 0 17px; fill: none; stroke: #777; stroke-width: 3; }

/* format panel */
.panel { width: 481px; flex: none; background: #f3f4f6; border-left: 2px solid #dcdcdc; font-size: 22.500px; display: flex; flex-direction: column; }
.ptabs { height: 67px; flex: none; display: flex; }
.ptab { background: #e4e4e4; border-left: 2px solid #dcdcdc; border-bottom: 2px solid #d8d8d8; color: #666; font-weight: 700; text-align: center; line-height: 68px; font-size: 24px; }
.ptab.active { width: 160px; background: #f3f4f6; border: 0; line-height: 76px; }
.ptab.mid { width: 163px; }
.ptab.last { width: 156px; padding-left: 4px; }
.sec { flex: none; border-bottom: 2px solid #dcdcdc; }
.styles { height: 197px; padding-top: 31px; }
.style-row { display: flex; align-items: center; }
.chev { width: 18px; height: 26px; margin: 0 24px 0 37px; fill: none; stroke: #bbb; stroke-width: 5; flex: none; }
.style-row .chev:last-child { margin: 0 0 0 19px; }
.swatches { display: grid; grid-template-columns: repeat(4, 72px); grid-auto-rows: 48px; gap: 12px; }
.sw { border: 2px solid; }
.s0 { background: #fff; border-color: #1a1a1a; }
.s1 { background: linear-gradient(#f5f5f5, #b3b3b3); border-color: #666; }
.s2 { background: linear-gradient(#dae8fc, #7ea6e0); border-color: #6c8ebf; }
.s3 { background: linear-gradient(#d5e8d4, #97d077); border-color: #82b366; }
.s4 { background: linear-gradient(#ffcd28, #ffa500); border-color: #d79b00; }
.s5 { background: linear-gradient(#fff2cc, #ffd966); border-color: #d6b656; }
.s6 { background: linear-gradient(#f8cecc, #ea6b66); border-color: #b85450; }
.s7 { background: linear-gradient(#e6d0de, #d5739d); border-color: #996185; }
.pager { display: flex; gap: 14px; margin: 21px 0 0 160px; }
.pager i { width: 16px; height: 16px; border: 2px solid #bbb; border-radius: 5px; }
.pager .on { background: #80d4ff; border-color: #c4cbd0; }
.row { display: flex; align-items: center; padding-left: 27px; }
.fillsec { height: 122px; padding-top: 12px; }
.fillsec .row:first-child { height: 43px; }
.r2 { height: 27px; margin-top: 13px; }
.cb { width: 26px; height: 26px; flex: none; border: 2px solid #767676; border-radius: 4px; background: #fff; display: block; }
.cb.on { background: #0b78ff; border-color: #0b78ff; }
.cb svg { display: block; width: 22px; height: 22px; fill: none; stroke: #fff; stroke-width: 3.500; }
.lab { margin-left: 13px; color: #666; line-height: 30px; padding-top: 2px; }
.lab.b { font-weight: 700; color: #666; }
.sel-box { display: flex; align-items: center; background: #efefef; border: 2px solid #dcdcdc; border-radius: 8px; font: 24px "Liberation Sans", sans-serif; color: #000; flex: none; }
.auto { width: 139px; height: 43px; margin-left: auto; padding-left: 8px; }
.chv { width: 18px; height: 12px; margin-left: auto; margin-right: 8px; fill: none; stroke: #111; stroke-width: 2.500; flex: none; }
.chv.gr { stroke: #777; margin-right: 6px; }
.colorbtn { width: 90px; height: 43px; margin-left: 10px; margin-right: 33px; flex: none; display: flex; align-items: center; padding-left: 5px; background: #f1f1f1; border: 2px solid #dcdcdc; border-radius: 8px; }
.colorbtn.push { margin-left: auto; height: 42px; }
.cswatch { width: 46px; height: 28px; border: 2px solid #000; flex: none; }
.cswatch.brown { background: #a0522d; }
.cswatch.black { background: #000; }
.pip { width: 26px; height: 26px; margin-left: 3px; fill: none; stroke: #666; stroke-width: 1.600; }
.linesec { height: 179px; padding-top: 13px; }
.r42 { height: 42px; }
.r40 { height: 40px; }
.mt14 { margin-top: 14px; }
.linesel { width: 267px; height: 42px; margin-left: 17px; }
.ln { width: 204px; height: 2px; margin-left: 20px; background: #555; }
.num { width: 102px; height: 40px; margin-left: 10px; flex: none; background: #fff; border: 2px solid #e0e0e0; border-radius: 8px; text-align: right; padding-right: 5px; font: 24px/36px "Liberation Sans", sans-serif; color: #000; }
.num.h42 { height: 42px; line-height: 38px; }
.num.push { margin-left: auto; }
.spin { width: 22px; height: 40px; margin-left: 3px; margin-right: 32px; flex: none; border: 2px solid #e0e0e0; border-radius: 6px; display: flex; flex-direction: column; align-items: center; justify-content: space-around; }
.spin.h42 { height: 42px; }
.spin .up { border-left: 8px solid transparent; border-right: 8px solid transparent; border-bottom: 8px solid #aaa; }
.spin .dn { border-left: 8px solid transparent; border-right: 8px solid transparent; border-top: 8px solid #aaa; }
.perim { margin-left: 13px; padding-left: 26px; }
.opsec { height: 69px; padding-top: 12px; }
.opl { margin-left: 2px; }
.chks { height: 123px; padding: 25px 0 0 32px; }
.chk-row { display: flex; height: 25px; align-items: center; }
.chk-row.second { margin-top: 22px; }
.chk { display: flex; align-items: center; }
.c-a { width: 216px; }
.chk .cb { width: 25px; height: 25px; }
.btns { height: 169px; padding: 16px 33px 0 27px; }
.btn { height: 40px; background: #efefef; border: 2px solid #dcdcdc; border-radius: 8px; text-align: center; font: 24px/36px "Liberation Sans", sans-serif; color: #000; }
.edit { height: 41px; margin-bottom: 5px; position: relative; padding-right: 26px; display: flex; align-items: center; justify-content: center; }
.edit .chv { position: absolute; right: 8px; top: 13px; margin: 0; }
.btn-row { display: grid; grid-template-columns: 1fr 1fr; gap: 4px; }
.dflt { height: 39px; margin-top: 5px; }
.tbl { height: 47px; padding: 3px 4px 0 3px; display: grid; grid-template-columns: 234px 234px; gap: 4px; }
.th { height: 37px; background: #e2e2e2; font-weight: 700; line-height: 38px; padding-left: 2px; }
.th1 { padding-left: 29px; position: relative; }
.tri { position: absolute; left: 10px; top: 10px; border-left: 8px solid #999; border-top: 7px solid transparent; border-bottom: 7px solid transparent; }
```
